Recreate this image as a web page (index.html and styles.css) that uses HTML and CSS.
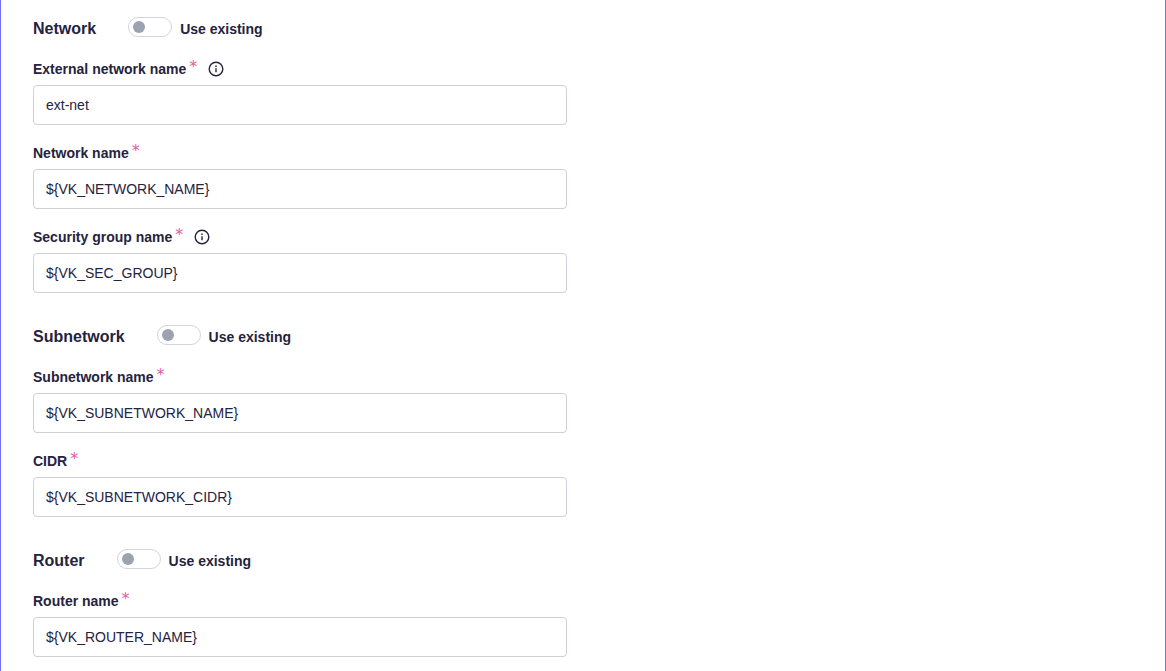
FILE: index.html
```html
<!DOCTYPE html>
<html lang="en">
  <head>
    <meta charset="UTF-8" />
    <meta name="viewport" content="width=device-width, initial-scale=1.0" />
    <title>Network settings</title>
    <link rel="stylesheet" href="styles.css">
  </head>
  <body>
    <form class="panel">
      <section class="group">
        <div class="group-head">
          <h2>Network</h2>
          <label class="switch">
            <input type="checkbox" name="network-existing" />
            <span>Use existing</span>
          </label>
        </div>
        <div class="field">
          <div class="field-head">
            <label for="ext-net">External network name</label>
            <span class="required">*</span>
            <svg class="info" viewBox="0 0 16 16" aria-hidden="true">
              <circle cx="8" cy="8" r="6.8" />
              <path d="M8 7.2v4M8 4.6v1.4" />
            </svg>
          </div>
          <input type="text" id="ext-net" value="ext-net" />
        </div>
        <div class="field">
          <div class="field-head">
            <label for="net-name">Network name</label>
            <span class="required">*</span>
          </div>
          <input type="text" id="net-name" value="${VK_NETWORK_NAME}" />
        </div>
        <div class="field">
          <div class="field-head">
            <label for="sec-group">Security group name</label>
            <span class="required">*</span>
            <svg class="info" viewBox="0 0 16 16" aria-hidden="true">
              <circle cx="8" cy="8" r="6.8" />
              <path d="M8 7.2v4M8 4.6v1.4" />
            </svg>
          </div>
          <input type="text" id="sec-group" value="${VK_SEC_GROUP}" />
        </div>
      </section>

      <section class="group">
        <div class="group-head">
          <h2>Subnetwork</h2>
          <label class="switch">
            <input type="checkbox" name="subnetwork-existing" />
            <span>Use existing</span>
          </label>
        </div>
        <div class="field">
          <div class="field-head">
            <label for="subnet-name">Subnetwork name</label>
            <span class="required">*</span>
          </div>
          <input type="text" id="subnet-name" value="${VK_SUBNETWORK_NAME}" />
        </div>
        <div class="field">
          <div class="field-head">
            <label for="cidr">CIDR</label>
            <span class="required">*</span>
          </div>
          <input type="text" id="cidr" value="${VK_SUBNETWORK_CIDR}" />
        </div>
      </section>

      <section class="group">
        <div class="group-head">
          <h2>Router</h2>
          <label class="switch">
            <input type="checkbox" name="router-existing" />
            <span>Use existing</span>
          </label>
        </div>
        <div class="field">
          <div class="field-head">
            <label for="router-name">Router name</label>
            <span class="required">*</span>
          </div>
          <input type="text" id="router-name" value="${VK_ROUTER_NAME}" />
        </div>
      </section>
    </form>
  </body>
</html>
```
FILE: styles.css
```css
* {
  margin: 0;
  padding: 0;
  box-sizing: border-box;
}
body {
  background: #ffffff;
  color: #25233e;
  font-family: "Liberation Sans", Arial, sans-serif;
  font-size: 14px;
}
.panel {
  display: grid;
  grid-template-columns: 1fr 1fr;
  align-content: start;
  gap: 32px;
  min-height: 100vh;
  padding: 17px 32px 14px;
  border: solid #7472f0;
  border-width: 0 1px;
}
.group {
  grid-column: 1;
  display: flex;
  flex-direction: column;
  gap: 16px;
}
.group-head {
  display: flex;
  align-items: flex-start;
  gap: 32px;
  height: 24px;
}
h2 {
  font-size: 16px;
  line-height: 24px;
}
.switch {
  display: flex;
  gap: 8px;
  font-weight: bold;
  line-height: 24px;
  cursor: pointer;
}
.switch input {
  appearance: none;
  width: 44px;
  height: 20px;
  padding: 3px 4px;
  border: 1px solid #d3d3de;
  border-radius: 10px;
  background: #ffffff;
  cursor: pointer;
}
.switch input::before {
  content: "";
  display: block;
  width: 12px;
  height: 12px;
  border-radius: 50%;
  background: #9da2b0;
}
.switch input:checked::before {
  margin-left: auto;
  background: #7472f0;
}
.field {
  display: flex;
  flex-direction: column;
  gap: 4px;
}
.field-head {
  display: flex;
  align-items: center;
  height: 24px;
  font-weight: bold;
}
.required {
  align-self: flex-start;
  margin-left: 3px;
  color: #e45ba5;
  font-family: "DejaVu Sans", sans-serif;
  font-size: 16px;
  font-weight: normal;
  line-height: 20px;
}
.info {
  width: 16px;
  height: 16px;
  margin-left: 11px;
  fill: none;
  stroke: #25233e;
  stroke-width: 1.4;
}
.field input {
  width: 100%;
  height: 40px;
  padding: 0 12px;
  border: 1px solid #d0d0dc;
  border-radius: 4px;
  background: #ffffff;
  color: inherit;
  font: inherit;
}
.field input:focus {
  outline: none;
  border-color: #7472f0;
}
```
